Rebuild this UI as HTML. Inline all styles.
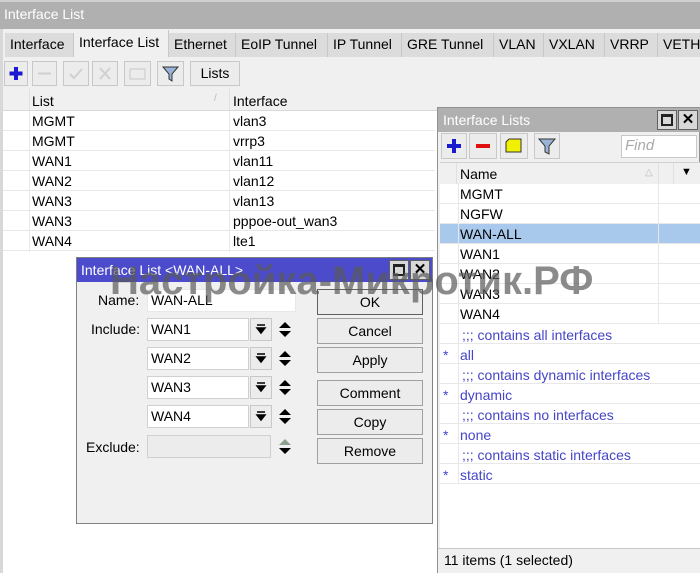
<!DOCTYPE html>
<html><head><meta charset="utf-8"><style>
*{box-sizing:border-box;margin:0;padding:0}
body{width:700px;height:573px;overflow:hidden;background:#f0f0f0;font-family:"Liberation Sans",Arial,sans-serif;font-size:14px;color:#000;position:relative}
.a{position:absolute}
.t{position:absolute;white-space:nowrap}
.btn{position:absolute;border:1px solid #c8c8c8;background:#ececec}
.row{position:absolute;height:20px;border-bottom:1px solid #e8e8e8;background:#fff}
.tab{position:absolute;top:33px;height:24px;background:#dcdcdc;border-right:1px solid #c8c8c8;padding:3px 5px;font-size:14px}
.dbtn{position:absolute;left:317px;width:106px;height:26px;border:1px solid #a0a0a0;background:#ececec;text-align:center;line-height:24px;font-size:14px}
.inp{position:absolute;height:23px;background:#fff;border:1px solid #d0d0d0;padding:2px 3px;font-size:14px}
.dd{position:absolute;width:22px;height:23px;border:1px solid #c8c8c8;background:#ececec}
.blue{color:#4545c8}
</style></head><body>
<div class="a" style="left:0;top:0;width:700px;height:29px;background:#b0b0b0;border-top:2px solid #d0d0d0"></div>
<div class="t" style="left:4px;top:6px;color:#fff;font-size:14px">Interface List</div>
<div class="a" style="left:0;top:29px;width:3px;height:544px;background:#d8d8d8"></div>
<div class="tab" style="left:5px;width:69px">Interface</div>
<div class="tab" style="left:74px;top:30px;height:27px;width:95px;background:#f0f0f0;padding-top:4px">Interface List</div>
<div class="tab" style="left:169px;width:67px">Ethernet</div>
<div class="tab" style="left:236px;width:92px">EoIP Tunnel</div>
<div class="tab" style="left:328px;width:74px">IP Tunnel</div>
<div class="tab" style="left:402px;width:92px">GRE Tunnel</div>
<div class="tab" style="left:494px;width:50px">VLAN</div>
<div class="tab" style="left:544px;width:61px">VXLAN</div>
<div class="tab" style="left:605px;width:53px">VRRP</div>
<div class="tab" style="left:658px;width:50px">VETH</div>
<div class="btn" style="left:4px;top:61px;width:24px;height:25px"><svg width="22" height="23"><path d="M11 5v13M4.5 11.5h13" stroke="#1a1ad0" stroke-width="4"/></svg></div>
<div class="btn" style="left:32px;top:61px;width:25px;height:25px"><svg width="23" height="23"><path d="M5 11.5h13" stroke="#d0d0d0" stroke-width="2"/></svg></div>
<div class="btn" style="left:63px;top:61px;width:26px;height:25px"><svg width="24" height="23"><path d="M6 12l4 4 8-9" stroke="#d0d0d0" stroke-width="2" fill="none"/></svg></div>
<div class="btn" style="left:92px;top:61px;width:26px;height:25px"><svg width="24" height="23"><path d="M7 6l10 11M17 6L7 17" stroke="#d0d0d0" stroke-width="2"/></svg></div>
<div class="btn" style="left:124px;top:61px;width:27px;height:25px"><svg width="25" height="23"><rect x="5" y="7" width="15" height="10" stroke="#c8c8c8" fill="none"/></svg></div>
<div class="btn" style="left:157px;top:61px;width:27px;height:25px"><svg width="25" height="23"><path d="M5 5h15l-6 7v7l-3-2v-5z" fill="#9ab4d8" stroke="#333"/></svg></div>
<div class="btn" style="left:190px;top:61px;width:50px;height:25px;text-align:center;line-height:23px">Lists</div>
<div class="a" style="left:3px;top:89px;width:697px;height:484px;background:#fff"></div>
<div class="a" style="left:3px;top:89px;width:697px;height:22px;background:#f0f0f0;border-bottom:1px solid #d8d8d8"></div>
<div class="a" style="left:29px;top:89px;width:1px;height:163px;background:#e0e0e0"></div>
<div class="a" style="left:229px;top:89px;width:1px;height:163px;background:#e0e0e0"></div>
<div class="t" style="left:32px;top:93px">List</div>
<div class="t" style="left:214px;top:93px;color:#bbb;font-size:10px">/</div>
<div class="t" style="left:233px;top:93px">Interface</div>
<div class="row" style="left:3px;top:111px;width:432px"></div>
<div class="row" style="left:3px;top:131px;width:432px"></div>
<div class="row" style="left:3px;top:151px;width:432px"></div>
<div class="row" style="left:3px;top:171px;width:432px"></div>
<div class="row" style="left:3px;top:191px;width:432px"></div>
<div class="row" style="left:3px;top:211px;width:432px"></div>
<div class="row" style="left:3px;top:231px;width:432px"></div>
<div class="a" style="left:29px;top:111px;width:1px;height:141px;background:#e8e8e8"></div>
<div class="a" style="left:229px;top:111px;width:1px;height:141px;background:#e8e8e8"></div>
<div class="t" style="left:32px;top:113px">MGMT</div><div class="t" style="left:233px;top:113px">vlan3</div>
<div class="t" style="left:32px;top:133px">MGMT</div><div class="t" style="left:233px;top:133px">vrrp3</div>
<div class="t" style="left:32px;top:153px">WAN1</div><div class="t" style="left:233px;top:153px">vlan11</div>
<div class="t" style="left:32px;top:173px">WAN2</div><div class="t" style="left:233px;top:173px">vlan12</div>
<div class="t" style="left:32px;top:193px">WAN3</div><div class="t" style="left:233px;top:193px">vlan13</div>
<div class="t" style="left:32px;top:213px">WAN3</div><div class="t" style="left:233px;top:213px">pppoe-out_wan3</div>
<div class="t" style="left:32px;top:233px">WAN4</div><div class="t" style="left:233px;top:233px">lte1</div>

<div class="a" style="left:437px;top:107px;width:263px;height:466px;background:#f0f0f0;border:1px solid #909090"></div>
<div class="a" style="left:438px;top:108px;width:262px;height:24px;background:#b0b0b0"></div>
<div class="t" style="left:443px;top:112px;color:#fff">Interface Lists</div>
<div class="a" style="left:657px;top:110px;width:20px;height:20px;border:1px solid #606060;background:#d8d8d8"><div class="a" style="left:3px;top:3px;width:12px;height:12px;border:2px solid #222;border-top-width:3px"></div></div>
<div class="a" style="left:678px;top:110px;width:20px;height:20px;border:1px solid #606060;background:#d8d8d8;text-align:center;font-weight:bold;line-height:18px;font-size:15px">✕</div>
<div class="btn" style="left:441px;top:133px;width:26px;height:26px"><svg width="24" height="24"><path d="M12 5v14M5 12h14" stroke="#1a1ad0" stroke-width="4"/></svg></div>
<div class="btn" style="left:469px;top:133px;width:28px;height:26px"><svg width="26" height="24"><path d="M6 12h14" stroke="#e01010" stroke-width="4"/></svg></div>
<div class="btn" style="left:500px;top:133px;width:28px;height:26px"><svg width="26" height="24"><path d="M5 8l3-3h12v13H5z" fill="#f0f000" stroke="#333"/></svg></div>
<div class="btn" style="left:534px;top:133px;width:26px;height:26px"><svg width="24" height="24"><path d="M4 5h16l-6 7v8l-4-2v-6z" fill="#9ab4d8" stroke="#333"/></svg></div>
<div class="a" style="left:621px;top:135px;width:76px;height:23px;background:#fff;border:1px solid #c8c8c8"></div>
<div class="t" style="left:625px;top:137px;color:#aaa;font-style:italic;font-size:15px">Find</div>
<div class="a" style="left:440px;top:162px;width:260px;height:386px;background:#fff;border-top:1px solid #d0d0d0"></div>
<div class="a" style="left:440px;top:163px;width:260px;height:22px;background:#f0f0f0;border-bottom:1px solid #d8d8d8"></div>
<div class="t" style="left:460px;top:166px">Name</div>
<div class="t" style="left:645px;top:167px;color:#bbb;font-size:10px">△</div>
<div class="t" style="left:681px;top:166px;font-size:11px">▼</div>
<div class="a" style="left:456px;top:163px;width:1px;height:170px;background:#e0e0e0"></div>
<div class="a" style="left:658px;top:163px;width:1px;height:22px;background:#e0e0e0"></div>
<div class="a" style="left:673px;top:163px;width:1px;height:22px;background:#e0e0e0"></div>
<div class="row" style="left:440px;top:184px;width:260px"></div>
<div class="row" style="left:440px;top:204px;width:260px"></div>
<div class="row" style="left:440px;top:224px;width:260px;background:#a8c8ec"></div>
<div class="row" style="left:440px;top:244px;width:260px"></div>
<div class="row" style="left:440px;top:264px;width:260px"></div>
<div class="row" style="left:440px;top:284px;width:260px"></div>
<div class="row" style="left:440px;top:304px;width:260px"></div>
<div class="row" style="left:440px;top:324px;width:260px"></div>
<div class="row" style="left:440px;top:344px;width:260px"></div>
<div class="row" style="left:440px;top:364px;width:260px"></div>
<div class="row" style="left:440px;top:384px;width:260px"></div>
<div class="row" style="left:440px;top:404px;width:260px"></div>
<div class="row" style="left:440px;top:424px;width:260px"></div>
<div class="row" style="left:440px;top:444px;width:260px"></div>
<div class="row" style="left:440px;top:464px;width:260px"></div>
<div class="a" style="left:458px;top:184px;width:1px;height:300px;background:#e8e8e8"></div>
<div class="a" style="left:658px;top:184px;width:1px;height:140px;background:#e8e8e8"></div>
<div class="t" style="left:460px;top:186px">MGMT</div>
<div class="t" style="left:460px;top:206px">NGFW</div>
<div class="t" style="left:460px;top:226px">WAN-ALL</div>
<div class="t" style="left:460px;top:246px">WAN1</div>
<div class="t" style="left:460px;top:266px">WAN2</div>
<div class="t" style="left:460px;top:286px">WAN3</div>
<div class="t" style="left:460px;top:306px">WAN4</div>
<div class="t blue" style="left:462px;top:327px">;;; contains all interfaces</div>
<div class="t blue" style="left:443px;top:347px">*</div><div class="t blue" style="left:460px;top:347px">all</div>
<div class="t blue" style="left:462px;top:367px">;;; contains dynamic interfaces</div>
<div class="t blue" style="left:443px;top:387px">*</div><div class="t blue" style="left:460px;top:387px">dynamic</div>
<div class="t blue" style="left:462px;top:407px">;;; contains no interfaces</div>
<div class="t blue" style="left:443px;top:427px">*</div><div class="t blue" style="left:460px;top:427px">none</div>
<div class="t blue" style="left:462px;top:447px">;;; contains static interfaces</div>
<div class="t blue" style="left:443px;top:467px">*</div><div class="t blue" style="left:460px;top:467px">static</div>
<div class="a" style="left:438px;top:548px;width:262px;height:25px;background:#f0f0f0;border-top:1px solid #c8c8c8"></div>
<div class="t" style="left:444px;top:552px">11 items (1 selected)</div>

<div class="a" style="left:76px;top:257px;width:357px;height:267px;background:#f0f0f0;border:1px solid #808080"></div>
<div class="a" style="left:77px;top:258px;width:355px;height:24px;background:#4b4bcc"></div>
<div class="t" style="left:81px;top:262px;color:#fff">Interface List &lt;WAN-ALL&gt;</div>
<div class="a" style="left:389px;top:260px;width:20px;height:20px;border:1px solid #606060;background:#d8d8d8"><div class="a" style="left:3px;top:3px;width:12px;height:12px;border:2px solid #222;border-top-width:3px"></div></div>
<div class="a" style="left:410px;top:260px;width:20px;height:20px;border:1px solid #606060;background:#d8d8d8;text-align:center;font-weight:bold;line-height:18px;font-size:15px">✕</div>
<div class="t" style="left:98px;top:292px">Name:</div>
<div class="inp" style="left:147px;top:289px;width:149px;border-color:#e8e8e8">WAN-ALL</div>
<div class="t" style="left:91px;top:321px">Include:</div>
<div class="t" style="left:86px;top:439px">Exclude:</div>
<div class="inp" style="left:147px;top:318px;width:102px">WAN1</div>
<div class="inp" style="left:147px;top:347px;width:102px">WAN2</div>
<div class="inp" style="left:147px;top:376px;width:102px">WAN3</div>
<div class="inp" style="left:147px;top:405px;width:102px">WAN4</div>
<div class="inp" style="left:147px;top:435px;width:124px;background:#ececec"></div>
<div class="dd" style="left:250px;top:318px"><svg width="20" height="21"><path d="M6 6h8M6 9h8l-4 5z" stroke="#000" fill="#000" stroke-width="1.5"/></svg></div>
<div class="dd" style="left:250px;top:347px"><svg width="20" height="21"><path d="M6 6h8M6 9h8l-4 5z" stroke="#000" fill="#000" stroke-width="1.5"/></svg></div>
<div class="dd" style="left:250px;top:376px"><svg width="20" height="21"><path d="M6 6h8M6 9h8l-4 5z" stroke="#000" fill="#000" stroke-width="1.5"/></svg></div>
<div class="dd" style="left:250px;top:405px"><svg width="20" height="21"><path d="M6 6h8M6 9h8l-4 5z" stroke="#000" fill="#000" stroke-width="1.5"/></svg></div>
<svg class="a" style="left:277px;top:320px" width="16" height="20"><path d="M2 8l6-6 6 6zM2 11l6 6 6-6z" fill="#000"/></svg>
<svg class="a" style="left:277px;top:349px" width="16" height="20"><path d="M2 8l6-6 6 6zM2 11l6 6 6-6z" fill="#000"/></svg>
<svg class="a" style="left:277px;top:378px" width="16" height="20"><path d="M2 8l6-6 6 6zM2 11l6 6 6-6z" fill="#000"/></svg>
<svg class="a" style="left:277px;top:407px" width="16" height="20"><path d="M2 8l6-6 6 6zM2 11l6 6 6-6z" fill="#000"/></svg>
<svg class="a" style="left:277px;top:437px" width="16" height="20"><path d="M2 8l6-6 6 6z" fill="#90a090"/><path d="M2 11l6 6 6-6z" fill="#000"/></svg>
<div class="dbtn" style="top:289px;border-color:#606060">OK</div>
<div class="dbtn" style="top:318px">Cancel</div>
<div class="dbtn" style="top:347px">Apply</div>
<div class="dbtn" style="top:380px">Comment</div>
<div class="dbtn" style="top:409px">Copy</div>
<div class="dbtn" style="top:438px">Remove</div>
<div class="t" style="left:110px;top:259px;font-size:40px;font-weight:bold;color:rgba(90,90,90,0.7)">Настройка-Микротик.РФ</div>
</body></html>
